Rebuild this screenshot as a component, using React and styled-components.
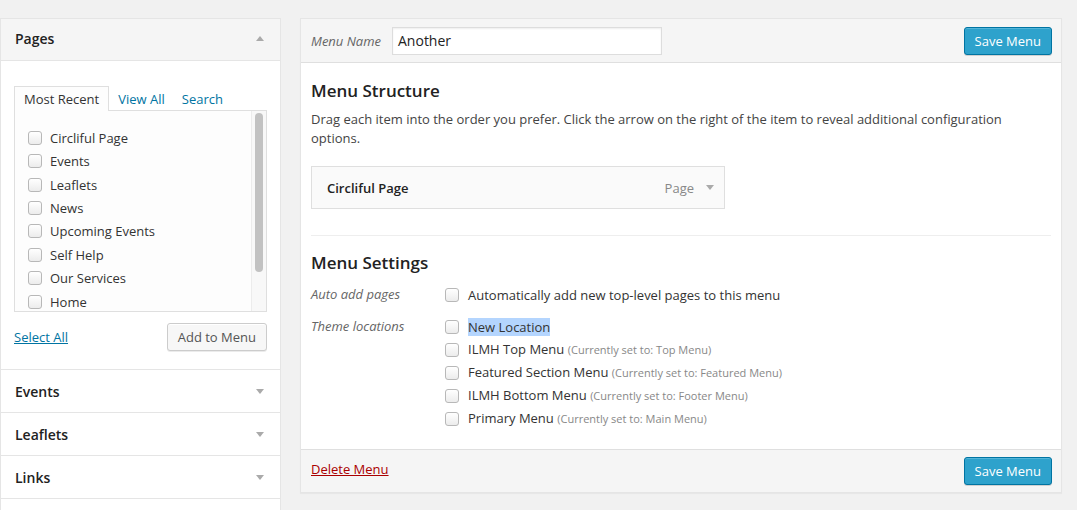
import React from 'react';
import styled, { createGlobalStyle } from 'styled-components';

const GlobalStyle = createGlobalStyle`
  html, body {
    margin: 0;
    padding: 0;
    background: #f1f1f1;
    font-family: 'Open Sans', 'Noto Sans', sans-serif;
    font-size: 13px;
    color: #444;
  }
  * { box-sizing: border-box; }
`;

// 페이지 전체
const Page = styled.div`
  display: flex;
  align-items: flex-start;
  gap: 19px;
  padding: 18px 15px 0 0;
  width: 1077px;
  height: 510px;
  overflow: hidden;
`;

// 왼쪽 메타박스 컬럼
const Sidebar = styled.div`
  width: 281px;
  flex-shrink: 0;
  background: #fff;
  border: 1px solid #e5e5e5;
`;

const Section = styled.div`
  border-bottom: 1px solid #e5e5e5;
  min-height: ${(p) => p.$minH || '0'};
`;

const SectionHead = styled.div`
  display: flex;
  justify-content: space-between;
  align-items: center;
  height: 42px;
  padding: 0 14px ${(p) => (p.$open ? '2px' : '0')} 14px;
  background: ${(p) => (p.$open ? '#f5f5f5' : '#fff')};
  border-bottom: ${(p) => (p.$open ? '1px solid #e5e5e5' : 'none')};
  font-size: 14px;
  font-weight: 600;
  color: #222;
`;

const Arrow = styled.span`
  width: 0;
  height: 0;
  border-left: 4px solid transparent;
  border-right: 4px solid transparent;
  ${(p) => (p.$up ? 'border-bottom: 5px solid #aaa;' : 'border-top: 5px solid #aaa;')}
  margin-right: ${(p) => p.$mr || '0'};
`;

const SectionBody = styled.div`
  padding: 24px 13px 18px 13px;
`;

const Tabs = styled.div`
  display: flex;
  align-items: flex-end;
  height: 25px;
`;

const Tab = styled.div`
  height: 25px;
  padding: 0 ${(p) => (p.$active ? '9px' : '6px')};
  margin-right: ${(p) => (p.$active ? '2px' : '3px')};
  display: flex;
  align-items: center;
  font-size: 13px;
  color: ${(p) => (p.$active ? '#333' : '#0074a2')};
  background: ${(p) => (p.$active ? '#fdfdfd' : 'transparent')};
  border: 1px solid ${(p) => (p.$active ? '#dfdfdf' : 'transparent')};
  border-bottom: none;
  margin-bottom: -1px;
  position: relative;
  z-index: 1;
`;

const ListBox = styled.div`
  display: flex;
  height: 202px;
  border: 1px solid #dfdfdf;
  background: #fdfdfd;
  overflow: hidden;
`;

const ListItems = styled.div`
  flex: 1;
  padding: 15px 0 0 13px;
`;

const ListRow = styled.label`
  display: flex;
  align-items: center;
  gap: 8px;
  height: 23.45px;
  font-size: 13px;
  color: #333;
`;

const Track = styled.div`
  width: 15px;
  border-left: 1px solid #ececec;
  background: #f8f8f8;
  padding: 2px 3px 0 3px;
`;

const Thumb = styled.div`
  height: 159px;
  border-radius: 5px;
  background: #c2c2c2;
`;

const Checkbox = styled.span`
  display: inline-block;
  width: 14px;
  height: 14px;
  flex-shrink: 0;
  border: 1px solid #b8b8b8;
  border-radius: 3px;
  background: linear-gradient(#fff, #ececec);
`;

const ActionRow = styled.div`
  display: flex;
  justify-content: space-between;
  align-items: center;
  margin-top: 11px;
`;

const LinkText = styled.a`
  color: ${(p) => p.$color || '#0074a2'};
  text-decoration: underline;
  font-size: 13px;
  margin-bottom: ${(p) => p.$lift || '0'};
`;

const Button = styled.button`
  height: 28px;
  padding: 0 10px;
  font-family: inherit;
  font-size: 13px;
  border-radius: 3px;
  color: ${(p) => (p.$primary ? '#fff' : '#555')};
  background: ${(p) => (p.$primary ? '#2ea2cc' : '#f7f7f7')};
  border: 1px solid ${(p) => (p.$primary ? '#0074a2' : '#ccc')};
  box-shadow: ${(p) =>
    p.$primary
      ? 'inset 0 1px 0 rgba(120,200,230,.5), 0 1px 0 rgba(0,0,0,.15)'
      : 'inset 0 1px 0 #fff, 0 1px 0 rgba(0,0,0,.08)'};
`;

// 오른쪽 메뉴 편집 패널
const Editor = styled.div`
  width: 763px;
  background: #fff;
  border: 1px solid #e5e5e5;
  box-shadow: 0 1px 1px rgba(0, 0, 0, 0.04);
`;

const Bar = styled.div`
  display: flex;
  justify-content: space-between;
  align-items: center;
  height: ${(p) => p.$h};
  padding: 0 9px 0 10px;
  background: #f5f5f5;
  ${(p) => (p.$top ? 'border-bottom: 1px solid #dfdfdf;' : 'border-top: 1px solid #dfdfdf;')}
`;

const NameGroup = styled.div`
  display: flex;
  align-items: center;
  gap: 11px;
`;

const Label = styled.span`
  font-style: italic;
  color: #666;
  font-size: 13px;
`;

const NameInput = styled.div`
  width: 270px;
  height: 28px;
  border: 1px solid #ddd;
  background: #fff;
  box-shadow: inset 0 1px 2px rgba(0, 0, 0, 0.07);
  padding: 0 5px;
  display: flex;
  align-items: center;
  font-size: 14px;
  color: #222;
`;

const Body = styled.div`
  padding: 0 10px 19px 10px;
`;

const Heading = styled.h3`
  margin: 0;
  font-size: 17px;
  font-weight: 600;
  color: #222;
  line-height: 24px;
  padding-top: ${(p) => p.$pt};
`;

const Desc = styled.p`
  margin: 7px 0 0 0;
  font-size: 13px;
  line-height: 19px;
  color: #444;
`;

const MenuItem = styled.div`
  display: flex;
  justify-content: space-between;
  align-items: center;
  width: 414px;
  height: 43px;
  margin-top: 18px;
  padding: 0 10px 0 15px;
  background: #fafafa;
  border: 1px solid #dfdfdf;
`;

const ItemTitle = styled.span`
  font-weight: 600;
  color: #222;
`;

const ItemMeta = styled.span`
  display: flex;
  align-items: center;
  gap: 12px;
  color: #888;
`;

const Divider = styled.hr`
  margin: 26px 0 0 0;
  border: none;
  border-top: 1px solid #eee;
`;

const SettingsGrid = styled.div`
  display: grid;
  grid-template-columns: 134px 1fr;
  row-gap: 9px;
  margin-top: 8px;
`;

const OptionList = styled.div`
  display: flex;
  flex-direction: column;
`;

const Option = styled.label`
  display: flex;
  align-items: center;
  gap: 9px;
  height: 23px;
  font-size: 13px;
  color: #333;
`;

const OptionText = styled.span`
  background: ${(p) => (p.$selected ? '#b4d5fe' : 'transparent')};
  line-height: 18px;
`;

const Note = styled.span`
  font-size: 11px;
  color: #888;
`;

const SettingLabel = styled(Label)`
  line-height: 23px;
`;

const recent = [
  'Circliful Page',
  'Events',
  'Leaflets',
  'News',
  'Upcoming Events',
  'Self Help',
  'Our Services',
  'Home',
];

const locations = [
  { name: 'New Location', selected: true },
  { name: 'ILMH Top Menu', note: 'Top Menu' },
  { name: 'Featured Section Menu', note: 'Featured Menu' },
  { name: 'ILMH Bottom Menu', note: 'Footer Menu' },
  { name: 'Primary Menu', note: 'Main Menu' },
];

const App = () => (
  <>
    <GlobalStyle />
    <Page>
      <Sidebar>
        <Section>
          <SectionHead $open>
            Pages
            <Arrow $up $mr="2px" />
          </SectionHead>
          <SectionBody>
            <Tabs>
              <Tab $active>Most Recent</Tab>
              <Tab>View All</Tab>
              <Tab>Search</Tab>
            </Tabs>
            <ListBox>
              <ListItems>
                {recent.map((title) => (
                  <ListRow key={title}>
                    <Checkbox />
                    {title}
                  </ListRow>
                ))}
              </ListItems>
              <Track>
                <Thumb />
              </Track>
            </ListBox>
            <ActionRow>
              <LinkText>Select All</LinkText>
              <Button>Add to Menu</Button>
            </ActionRow>
          </SectionBody>
        </Section>
        {['Events', 'Leaflets', 'Links'].map((name) => (
          <Section key={name}>
            <SectionHead>
              {name}
              <Arrow $mr="2px" />
            </SectionHead>
          </Section>
        ))}
        {/* 화면 아래로 이어지는 다음 섹션 */}
        <Section $minH="42px" />
      </Sidebar>

      <Editor>
        <Bar $top $h="44px">
          <NameGroup>
            <Label>Menu Name</Label>
            <NameInput>Another</NameInput>
          </NameGroup>
          <Button $primary>Save Menu</Button>
        </Bar>
        <Body>
          <Heading $pt="16px">Menu Structure</Heading>
          <Desc>
            Drag each item into the order you prefer. Click the arrow on the right of the item to
            reveal additional configuration options.
          </Desc>
          <MenuItem>
            <ItemTitle>Circliful Page</ItemTitle>
            <ItemMeta>
              Page
              <Arrow />
            </ItemMeta>
          </MenuItem>
          <Divider />
          <Heading $pt="15px">Menu Settings</Heading>
          <SettingsGrid>
            <SettingLabel>Auto add pages</SettingLabel>
            <Option>
              <Checkbox />
              Automatically add new top-level pages to this menu
            </Option>
            <SettingLabel>Theme locations</SettingLabel>
            <OptionList>
              {locations.map((loc) => (
                <Option key={loc.name}>
                  <Checkbox />
                  <OptionText $selected={loc.selected}>
                    {loc.name} {loc.note && <Note>(Currently set to: {loc.note})</Note>}
                  </OptionText>
                </Option>
              ))}
            </OptionList>
          </SettingsGrid>
        </Body>
        <Bar $h="43px">
          <LinkText $color="#a00" $lift="4px">Delete Menu</LinkText>
          <Button $primary>Save Menu</Button>
        </Bar>
      </Editor>
    </Page>
  </>
);

export default App;
